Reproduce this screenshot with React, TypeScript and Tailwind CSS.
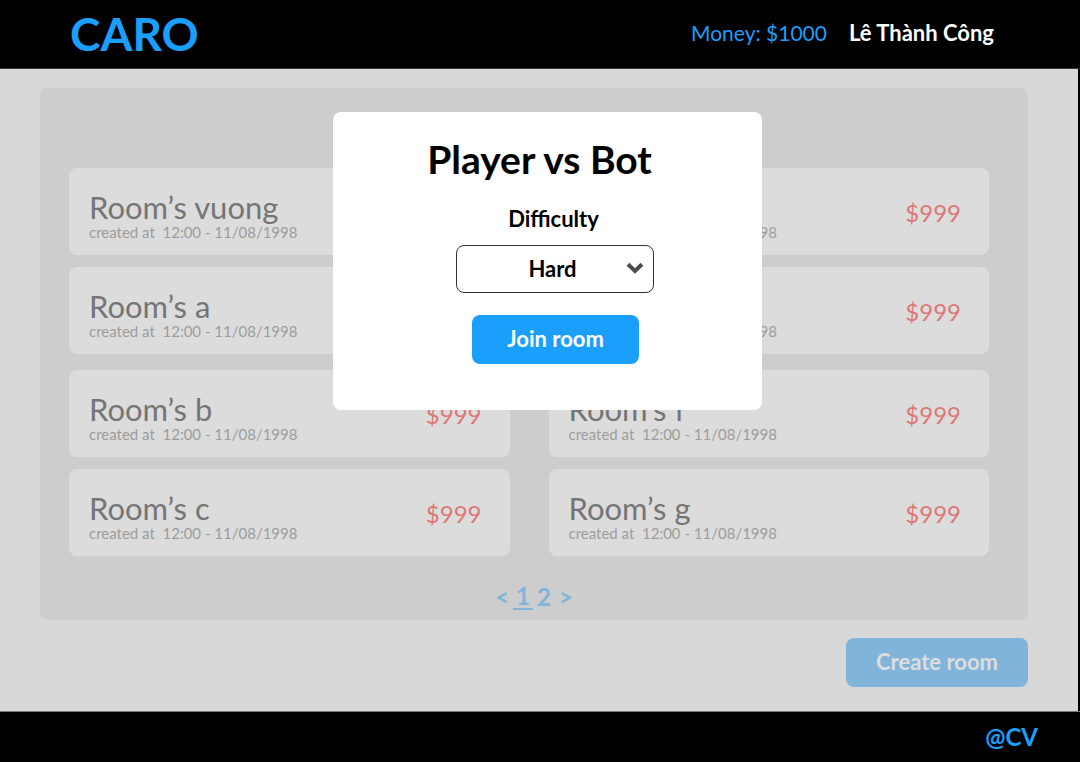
import { useState } from "react";

type Room = { name: string; price: string };

const rooms: Room[][] = [
  [
    { name: "vuong", price: "$999" },
    { name: "d", price: "$999" },
    { name: "a", price: "$999" },
    { name: "e", price: "$999" },
  ],
  [
    { name: "b", price: "$999" },
    { name: "f", price: "$999" },
    { name: "c", price: "$999" },
    { name: "g", price: "$999" },
  ],
];

function RoomCard({ name, price }: Room) {
  return (
    <li className="flex h-[87px] items-center justify-between rounded-lg bg-[#dcdcdc] pr-7 pl-5">
      <div className="pt-1">
        <h2 className="text-[31px] leading-9 text-[#757575]">Room’s {name}</h2>
        <p className="text-[15px] leading-3.5 whitespace-pre text-[#9c9c9c]">created at  12:00 - 11/08/1998</p>
      </div>
      <span className="pt-0.5 text-2xl text-[#dd7777]">{price}</span>
    </li>
  );
}

export default function App() {
  const [level, setLevel] = useState("Hard");
  return (
    <div className="flex min-h-screen flex-col bg-black font-['Lato',sans-serif]">
      <header className="flex h-[69px] items-center justify-between border-b border-[#333333] bg-black pr-[86px] pl-[70px]">
        <h1 className="text-[46px] leading-[48px] font-bold text-[#1a9ffc]">CARO</h1>
        <div className="flex items-center gap-[22px] pb-[3px]">
          <span className="text-[21px] text-[#1a9ffc]">Money: $1000</span>
          <span className="text-[22px] font-bold text-white">Lê Thành Công</span>
        </div>
      </header>

      <main className="relative mr-0.5 flex-1 bg-[#d8d8d8] pt-[19px] pr-[50px] pb-6 pl-10">
        <section className="rounded-lg bg-[#cdcdcd] pr-[39px] pb-[7px] pl-[29px]">
          <div className="h-20" />
          <div className="flex flex-col gap-4">
            {rooms.map((group, i) => (
              <ul key={i} className="grid grid-cols-2 gap-x-[39px] gap-y-3">
                {group.map((room) => (
                  <RoomCard key={room.name} {...room} />
                ))}
              </ul>
            ))}
          </div>
          <nav aria-label="Pages" className="mt-[25px] flex items-center justify-center gap-1 pl-2.5 text-2xl leading-8 font-bold text-[#80b4da]">
            <a href="#prev">&lt;</a>
            <a href="#1" className="border-b-2 border-[#80b4da] px-[3px] leading-6">1</a>
            <a href="#2">2</a>
            <a href="#next" className="pl-1">&gt;</a>
          </nav>
        </section>
        <div className="mt-[18px] flex justify-end">
          <button className="h-[49px] rounded-lg bg-[#80b4da] px-[30px] pb-0.5 text-[22px] font-bold text-[#dddddd]">Create room</button>
        </div>

        <div
          role="dialog"
          aria-labelledby="dialog-title"
          className="absolute top-[43px] left-[333px] flex h-[298px] w-[429px] flex-col items-center rounded-lg bg-white pt-6"
        >
          <h2 id="dialog-title" className="pr-4 text-[39px] leading-[46px] font-bold">Player vs Bot</h2>
          <label htmlFor="level" className="mt-[21px] pl-3 text-[22px] leading-8 font-bold">Difficulty</label>
          <div className="relative mt-2.5 ml-3.5">
            <select
              id="level"
              value={level}
              onChange={(e) => setLevel(e.target.value)}
              className="h-12 w-[198px] appearance-none rounded-lg border border-[#333333] bg-white pr-1 pb-0.5 text-center text-[22px] font-bold [text-align-last:center]"
            >
              <option>Easy</option>
              <option>Medium</option>
              <option>Hard</option>
            </select>
            <svg className="pointer-events-none absolute top-[17px] right-2.5" width="18" height="12" viewBox="0 0 18 12" fill="none" stroke="#4d4d4d" strokeWidth="4">
              <path d="M2 2.3 9 9 16 2.3" />
            </svg>
          </div>
          <button className="mt-[22px] ml-4 h-[49px] w-[167px] rounded-lg bg-[#1a9ffc] pb-0.5 text-[22px] font-bold text-white">Join room</button>
        </div>
      </main>

      <footer className="flex h-[51px] items-center justify-end border-t border-[#777777] bg-black pr-[42px]">
        <span className="text-2xl font-bold text-[#1a9ffc]">@CV</span>
      </footer>
    </div>
  );
}
